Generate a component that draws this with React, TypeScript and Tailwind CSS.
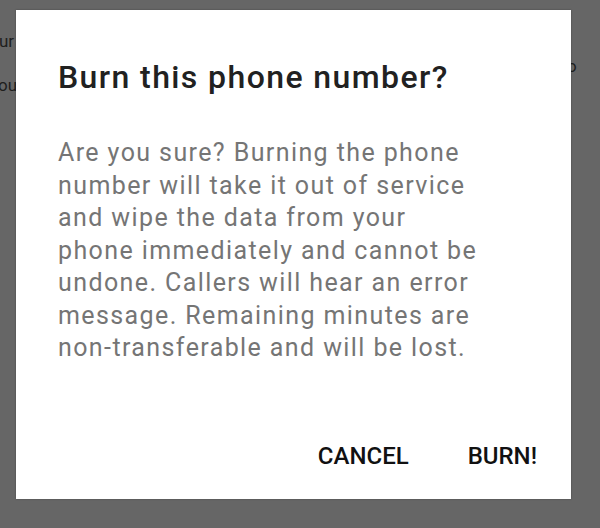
export default function App() {
  return (
    <div className="relative h-[528px] w-[600px] overflow-hidden bg-[#666666] font-['Roboto','Liberation_Sans',sans-serif]">
      {/* page behind the scrim */}
      <span className="absolute left-[-1px] top-[31px] text-[17px] leading-[20px] text-[#1e1e1e]">ur</span>
      <span className="absolute left-[-2px] top-[75px] text-[17px] leading-[20px] text-[#1e1e1e]">ou</span>
      <span className="absolute left-[567px] top-[56px] text-[17px] leading-[20px] text-[#1e1e1e]">o</span>

      <div className="absolute left-[16px] top-[10px] flex h-[489px] w-[555px] flex-col bg-white shadow-[0_0_2px_rgba(0,0,0,0.3)]">
        <h2 className="pl-[42px] pt-[47px] text-[32px] font-medium leading-[40px] tracking-[1.4px] text-[#212121]">
          Burn this phone number?
        </h2>
        <p className="mt-[40px] pl-[42px] text-[25px] leading-[32.5px] tracking-[1.4px] text-[#757575]">
          Are you sure? Burning the phone
          <br />
          number will take it out of service
          <br />
          and wipe the data from your
          <br />
          phone immediately and cannot be
          <br />
          undone. Callers will hear an error
          <br />
          message. Remaining minutes are
          <br />
          non-transferable and will be lost.
        </p>
        <div className="mt-auto flex justify-end gap-[59px] pb-[27px] pr-[34px]">
          <button className="text-[24px] font-medium leading-[32px] text-[#111111]">CANCEL</button>
          <button className="text-[24px] font-medium leading-[32px] text-[#111111]">BURN!</button>
        </div>
      </div>
    </div>
  );
}
